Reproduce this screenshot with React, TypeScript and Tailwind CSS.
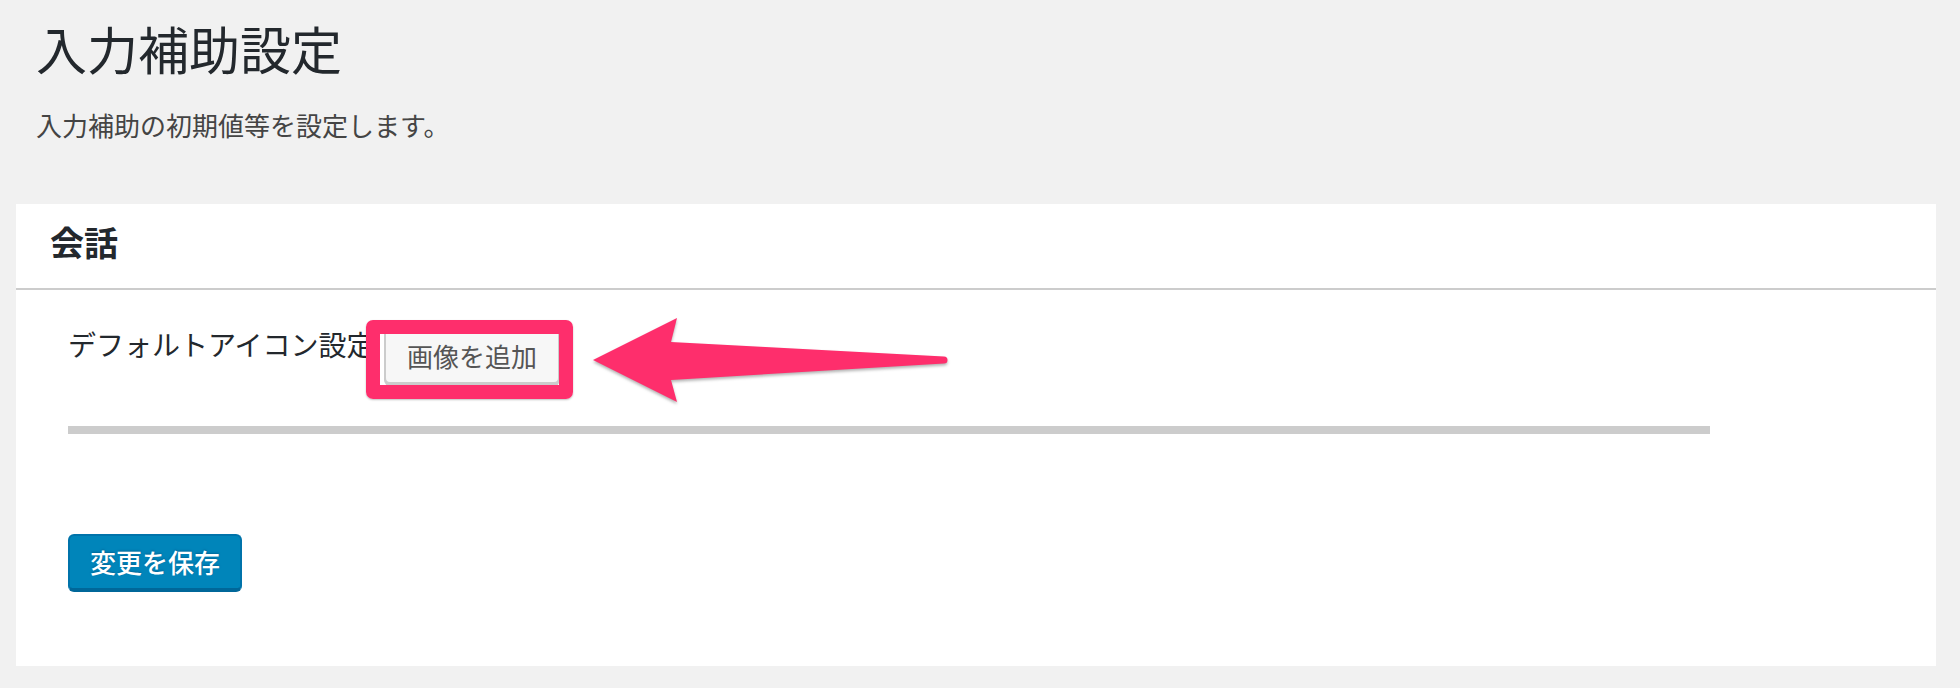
import React from "react";

export default function App() {
  return (
    <div className="relative min-h-[688px] w-full bg-[#f1f1f1] pl-[16px] pr-[24px] pt-[23px] font-['Noto_Sans_CJK_JP',sans-serif]">
      <h1 className="ml-[20px] text-[51px] font-normal leading-none text-[#23282d]">入力補助設定</h1>
      <p className="ml-[20px] mt-[38px] text-[26px] leading-none text-[#444]">入力補助の初期値等を設定します。</p>

      <section className="mt-[66px] h-[462px] bg-white">
        <div className="h-[86px] border-b-2 border-[#cccccc] pl-[34px] pt-[21px]">
          <h2 className="text-[34px] font-bold leading-none text-[#23282d]">会話</h2>
        </div>
        <div className="pl-[52px] pt-[38px]">
          <div className="flex items-start">
            <div className="mt-[2px] w-[316px] whitespace-nowrap text-[28px] leading-none text-[#23282d]">デフォルトアイコン設定</div>
            <button className="h-[56px] rounded-[6px] border-2 border-[#cccccc] bg-[#f7f7f7] px-[21px] text-[26px] leading-none text-[#555] shadow-[0_2px_0_#cccccc]">
              画像を追加
            </button>
          </div>
          <div className="mt-[42px] h-[8px] w-[1642px] bg-[#cccccc]" />
          <button className="mt-[100px] h-[58px] rounded-[6px] border-2 border-b-4 border-[#0073aa] border-b-[#006799] bg-[#0085ba] px-[20px] text-[26px] font-medium leading-none text-white [text-shadow:0_-1px_2px_#006799]">
            変更を保存
          </button>
        </div>
      </section>

      {/* annotation: highlight box */}
      <div className="absolute left-[366px] top-[320px] h-[79px] w-[207px] rounded-[7px] border-[14px] border-[#fe2e6c] shadow-[0_1px_2px_rgba(0,0,0,0.25)]" />

      {/* annotation: arrow */}
      <svg
        className="absolute left-[585px] top-[310px] h-[100px] w-[370px] drop-shadow-[0_2px_1.5px_rgba(0,0,0,0.3)]"
        viewBox="0 0 370 100"
      >
        <path
          d="M8 50 L92 8 L86 32 L359 46.5 A3.5 3.5 0 0 1 359 53.5 L86 70 L92 92 Z"
          fill="#fe2e6c"
        />
      </svg>
    </div>
  );
}
